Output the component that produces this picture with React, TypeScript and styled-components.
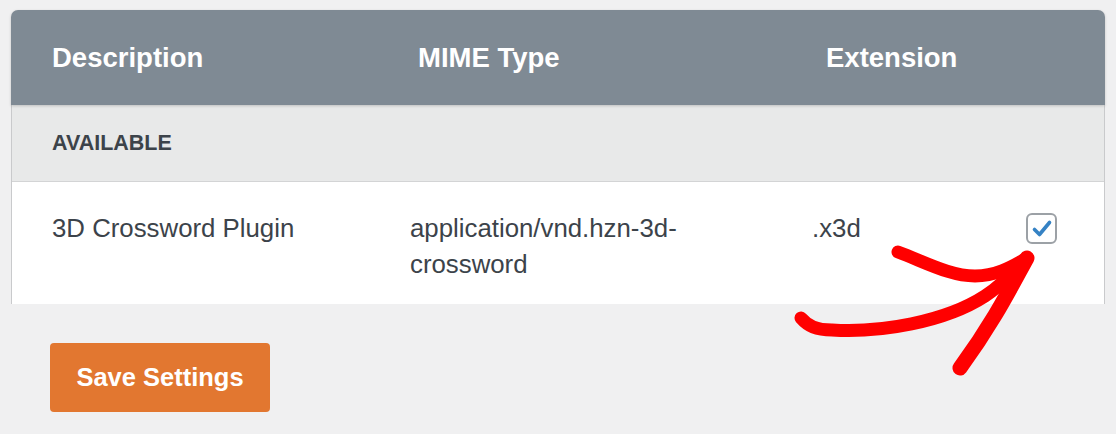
import styled, { createGlobalStyle } from "styled-components";

const GlobalStyle = createGlobalStyle`
  body {
    margin: 0;
    background: #f0f0f1;
    font-family: "Liberation Sans", Arial, Helvetica, sans-serif;
  }
`;

const Page = styled.div`
  position: relative;
  width: 1116px;
  height: 434px;
  box-sizing: border-box;
  padding: 10px 11px 0 11px;
  overflow: hidden;
`;

const Table = styled.div`
  width: 100%;
`;

const HeaderRow = styled.div`
  display: grid;
  grid-template-columns: 366px 408px 1fr;
  align-items: center;
  height: 95px;
  padding-left: 41px;
  background: #7f8a94;
  border-radius: 7px 7px 0 0;
  box-shadow: 0 1px 3px rgba(0, 0, 0, 0.18);
  position: relative;
  z-index: 1;
`;

const HeaderCell = styled.div`
  color: #fff;
  font-size: 27.5px;
  font-weight: 700;
`;

const Body = styled.div`
  border-left: 1px solid #c9cacc;
  border-right: 1px solid #c9cacc;
`;

const SectionRow = styled.div`
  display: flex;
  align-items: center;
  height: 76px;
  padding-left: 40px;
  background: #e8e9e9;
  border-bottom: 1px solid #d3d4d5;
  color: #3c434a;
  font-size: 21.5px;
  font-weight: 700;
`;

const DataRow = styled.div`
  display: grid;
  grid-template-columns: 358px 402px 1fr 31px;
  align-items: start;
  height: 122px;
  box-sizing: border-box;
  padding: 28px 47px 0 40px;
  background: #fff;
`;

const Cell = styled.div<{ $gap?: number }>`
  color: #3c434a;
  font-size: 25.8px;
  line-height: 36px;
  padding-right: ${(p) => p.$gap ?? 0}px;
`;

const Checkbox = styled.span`
  display: flex;
  align-items: center;
  justify-content: center;
  width: 31px;
  height: 31px;
  margin-top: 3px;
  box-sizing: border-box;
  border: 2px solid #9ca1a6;
  border-radius: 6px;
  background: #fff;
`;

const Footer = styled.div`
  padding: 39px 0 0 39px;
`;

const SaveButton = styled.button`
  width: 220px;
  height: 69px;
  border: none;
  border-radius: 4px;
  background: #e27730;
  color: #fff;
  font-family: "Liberation Sans", Arial, sans-serif;
  font-size: 25.5px;
  font-weight: 700;
  cursor: pointer;
`;

const ArrowLayer = styled.svg`
  position: absolute;
  left: 0;
  top: 0;
  pointer-events: none;
`;

const App = () => {
  return (
    <>
      <GlobalStyle />
      <Page>
        <Table>
          <HeaderRow>
            <HeaderCell>Description</HeaderCell>
            <HeaderCell>MIME Type</HeaderCell>
            <HeaderCell>Extension</HeaderCell>
          </HeaderRow>
          <Body>
            <SectionRow>AVAILABLE</SectionRow>
            <DataRow>
              <Cell>3D Crossword Plugin</Cell>
              <Cell $gap={30}>application/vnd.hzn-3d-crossword</Cell>
              <Cell>.x3d</Cell>
              <Checkbox>
                <svg width="22" height="22" viewBox="0 0 22 22">
                  <path
                    d="M3.5 11.5 L8.5 16.5 L18.5 4.5"
                    fill="none"
                    stroke="#3582c4"
                    strokeWidth="3.6"
                    strokeLinecap="round"
                    strokeLinejoin="round"
                  />
                </svg>
              </Checkbox>
            </DataRow>
          </Body>
        </Table>
        <Footer>
          <SaveButton>Save Settings</SaveButton>
        </Footer>
        <ArrowLayer width="1116" height="434" viewBox="0 0 1116 434">
          <g fill="none" stroke="#ff0000" strokeLinecap="round" strokeLinejoin="round">
            <path
              d="M801 318 C808 326 816 330 832 330 C880 333 945 322 985 296 C1003 284 1016 270 1027 258"
              strokeWidth="13"
            />
            <path
              d="M898 252 C925 262 950 276 975 276 C995 276 1010 268 1027 258"
              strokeWidth="13"
            />
            <path d="M1027 258 C1012 285 995 320 960 368" strokeWidth="15" />
          </g>
        </ArrowLayer>
      </Page>
    </>
  );
};

export default App;
